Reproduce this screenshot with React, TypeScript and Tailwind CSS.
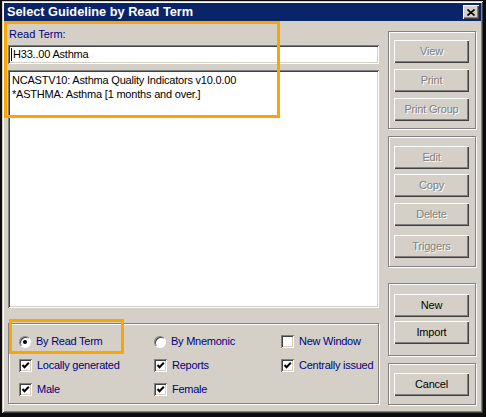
import React from "react";

const raised =
  "shadow-[inset_1px_1px_0_#fff,inset_-1px_-1px_0_#404040,inset_-2px_-2px_0_#808080]";
const sunken =
  "shadow-[inset_1px_1px_0_#808080,inset_-1px_-1px_0_#fff,inset_2px_2px_0_#404040,inset_-2px_-2px_0_#d4d0c8]";
const etched = "border border-[#808080] shadow-[inset_1px_1px_0_#fff,1px_1px_0_#fff]";

function Btn({ label, disabled, className = "" }: { label: string; disabled?: boolean; className?: string }) {
  return (
    <div
      className={`flex h-[23px] w-[75px] items-center justify-center bg-[#d4d0c8] text-[11px] tracking-[-0.2px] ${raised} ${
        disabled ? "text-[#808080] [text-shadow:1px_1px_0_#fff]" : "text-black"
      } ${className}`}
    >
      {label}
    </div>
  );
}

function Check({ checked }: { checked: boolean }) {
  return (
    <span className={`flex h-[13px] w-[13px] shrink-0 items-center justify-center bg-white ${sunken}`}>
      {checked && (
        <svg width="9" height="9" viewBox="0 0 9 9">
          <polyline points="1.5,4 3.5,6.2 7.8,1.8" fill="none" stroke="#000" strokeWidth="2" />
        </svg>
      )}
    </span>
  );
}

function Radio({ on }: { on: boolean }) {
  return (
    <span className="flex h-[12px] w-[12px] shrink-0 items-center justify-center rounded-full border border-t-[#808080] border-l-[#808080] border-r-white border-b-white bg-white shadow-[inset_1px_1px_0_#404040]">
      {on && <span className="h-[4px] w-[4px] rounded-full bg-black" />}
    </span>
  );
}

function Opt({ kind, on, label }: { kind: "radio" | "check"; on: boolean; label: string }) {
  return (
    <div className="flex h-[13px] items-center gap-[5px] text-[11px] tracking-[-0.25px] text-[#000080]">
      {kind === "radio" ? <Radio on={on} /> : <Check checked={on} />}
      <span className="whitespace-nowrap">{label}</span>
    </div>
  );
}

export default function App() {
  return (
    <div className="relative h-[417px] w-[486px] overflow-hidden bg-[#0c0c0c] pl-[2px] pt-[1px] font-['Liberation_Sans',Arial,sans-serif]">
      <div className="flex h-[412px] w-[481px] flex-col bg-[#d4d0c8] p-[2px] shadow-[inset_1px_1px_0_#d4d0c8,inset_-1px_-1px_0_#404040,inset_2px_2px_0_#fff,inset_-2px_-2px_0_#808080]">
        {/* title bar */}
        <div className="flex h-[18px] items-center justify-between bg-[#0a246a] pl-[3px] pr-[2px]">
          <span className="text-[12.75px] font-bold text-white">Select Guideline by Read Term</span>
          <div className={`flex h-[14px] w-[16px] items-center justify-center bg-[#d4d0c8] ${raised}`}>
            <svg width="8" height="7" viewBox="0 0 8 7">
              <path d="M0.5 0.5 L7.5 6.5 M7.5 0.5 L0.5 6.5" stroke="#000" strokeWidth="1.6" />
            </svg>
          </div>
        </div>

        <div className="flex pl-[4px]">
          {/* left column */}
          <div className="flex w-[371px] flex-col">
            <div className="mt-[6px] pl-[1px] text-[11px] leading-[14px] text-[#000080]">Read Term:</div>
            <div className={`mt-[4px] flex h-[19px] items-center bg-white pl-[3px] text-[11px] tracking-[-0.2px] text-black ${sunken}`}>
              <span className="mr-[1px] h-[13px] w-[1px] bg-black" />
              H33..00 Asthma
            </div>
            <div className={`mt-[6px] h-[238px] bg-white pl-[4px] pt-[3px] text-[11px] leading-[14px] tracking-[-0.2px] text-black ${sunken}`}>
              <div>NCASTV10: Asthma Quality Indicators v10.0.00</div>
              <div>*ASTHMA: Asthma [1 months and over.]</div>
            </div>
            <div className={`mt-[15px] h-[81px] pl-[10px] pt-[11px] ${etched}`}>
              <div className="grid grid-cols-[135px_127px_1fr] gap-y-[11px]">
                <Opt kind="radio" on label="By Read Term" />
                <Opt kind="radio" on={false} label="By Mnemonic" />
                <Opt kind="check" on={false} label="New Window" />
                <Opt kind="check" on label="Locally generated" />
                <Opt kind="check" on label="Reports" />
                <Opt kind="check" on label="Centrally issued" />
                <Opt kind="check" on label="Male" />
                <Opt kind="check" on label="Female" />
              </div>
            </div>
          </div>

          {/* right column */}
          <div className="ml-[9px] flex w-[88px] flex-col">
            <div className={`mt-[10px] flex h-[98px] flex-col gap-[6px] pl-[5px] pt-[8px] ${etched}`}>
              <Btn label="View" disabled />
              <Btn label="Print" disabled />
              <Btn label="Print Group" disabled />
            </div>
            <div className={`mt-[7px] flex h-[131px] flex-col pl-[5px] pt-[9px] ${etched}`}>
              <Btn label="Edit" disabled />
              <Btn label="Copy" disabled className="mt-[5px]" />
              <Btn label="Delete" disabled className="mt-[6px]" />
              <Btn label="Triggers" disabled className="mt-[9px]" />
            </div>
            <div className={`mt-[16px] flex h-[73px] flex-col gap-[4px] pl-[5px] pt-[10px] ${etched}`}>
              <Btn label="New" />
              <Btn label="Import" />
            </div>
            <div className={`mt-[7px] flex h-[42px] flex-col pl-[5px] pt-[9px] ${etched}`}>
              <Btn label="Cancel" />
            </div>
          </div>
        </div>
      </div>

      {/* annotation highlights */}
      <div className="absolute left-[4px] top-[21px] h-[97px] w-[276px] border-[3px] border-[#f8a700]" />
      <div className="absolute left-[9px] top-[319px] h-[35px] w-[115px] border-[3px] border-[#f8a700]" />
    </div>
  );
}
